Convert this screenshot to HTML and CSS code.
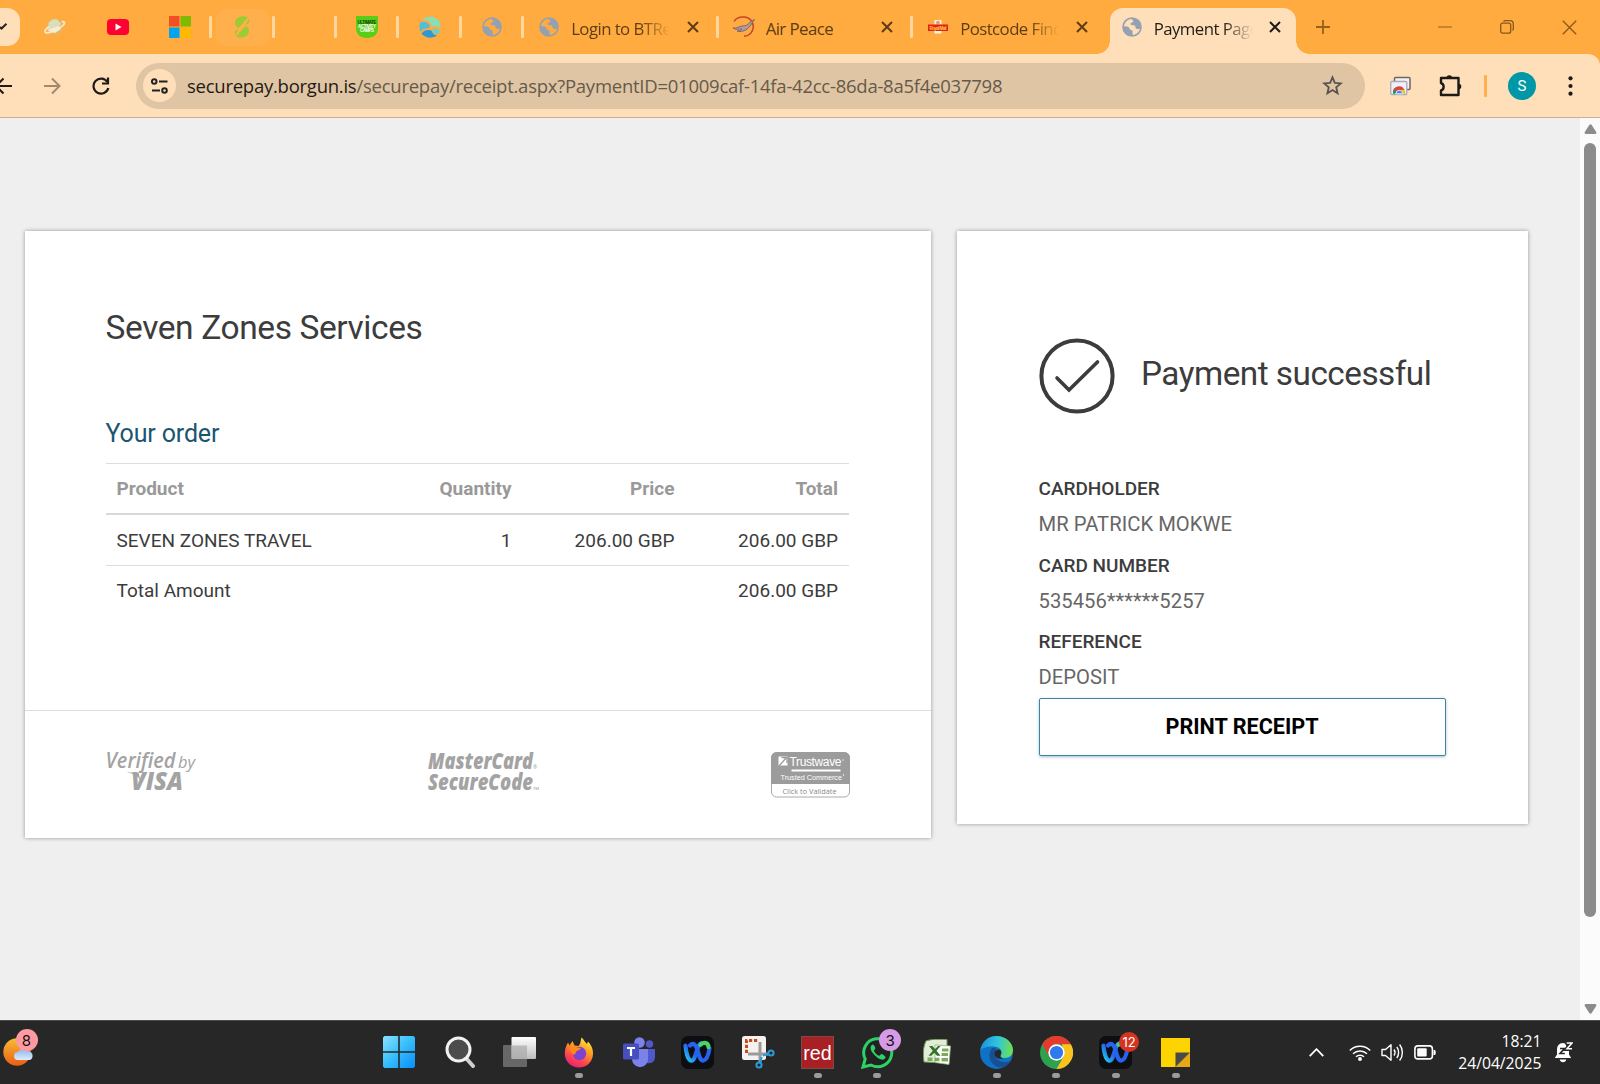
FILE: index.html
```html
<!DOCTYPE html>
<html lang="en">
<head>
<meta charset="utf-8">
<title>Payment Page</title>
<link rel="stylesheet" href="styles.css">
</head>
<body>
<svg class="defs" width="0" height="0" aria-hidden="true">
  <defs>
    <linearGradient id="gw" x1="0" y1="0" x2="1" y2="1"><stop offset="0" stop-color="#8be3ff"/><stop offset=".5" stop-color="#35bdfb"/><stop offset="1" stop-color="#0a8dfa"/></linearGradient>
    <linearGradient id="gsun" x1="0" y1="0" x2="0" y2="1"><stop offset="0" stop-color="#f8bb35"/><stop offset="1" stop-color="#ea5f14"/></linearGradient>
    <linearGradient id="gcloud" x1="0" y1="0" x2="0" y2="1"><stop offset="0" stop-color="#8fb4ee"/><stop offset="1" stop-color="#dcecff"/></linearGradient>
    <linearGradient id="gff" x1=".8" y1="0" x2=".3" y2="1"><stop offset="0" stop-color="#fff04a"/><stop offset=".4" stop-color="#ff9a1f"/><stop offset=".75" stop-color="#ff4050"/><stop offset="1" stop-color="#e6207c"/></linearGradient>
    <linearGradient id="gwx" x1="0" y1="1" x2="1" y2="0"><stop offset="0" stop-color="#1fd3ea"/><stop offset=".5" stop-color="#2460ee"/><stop offset="1" stop-color="#2f86ff"/></linearGradient>
    <linearGradient id="gtv" x1="0" y1="0" x2="0" y2="1"><stop offset="0" stop-color="#fff"/><stop offset="1" stop-color="#bdbdbd"/></linearGradient>
    <linearGradient id="gedge" x1="0" y1=".3" x2="1" y2=".4"><stop offset="0" stop-color="#1a8fd8"/><stop offset=".5" stop-color="#2fc3df"/><stop offset="1" stop-color="#6ee04f"/></linearGradient>
    <linearGradient id="gsw" x1="0" y1="1" x2="1" y2="0"><stop offset="0" stop-color="#2f9fd6"/><stop offset="1" stop-color="#7fe3b8"/></linearGradient>
    <symbol id="globe" viewBox="0 0 20 20"><circle cx="10" cy="10" r="9.8" fill="#93a1b3"/><path class="land" d="M8.500 2C4.800 3 2.300 6 2 9.300c2.300.2 4 .2 5 1.200.8.900.3 1.900 1.500 2.300 1.600.4 2.300 1 2 2.400-.2 1 0 2 .6 2.700 3.500-.4 6.200-3 6.900-6.400-1.600.8-3.400.8-4.300-.6-.6-1.200 0-2-1.100-2.500-1.300-.6-3 .2-3.900-.9-.6-1 .5-1.600 1.500-2C11.500 5 11.400 4.500 11 3.600 10.500 2.600 9.500 2 8.500 2z"/></symbol>
    <symbol id="webex" viewBox="0 0 33 33"><rect width="33" height="33" rx="7" fill="#0d0e11"/><path d="M4.500 9.500C6 24 9.500 26 12 24c3.500-3 3.500-15 8-16.500" fill="none" stroke="url(#gwx)" stroke-width="4.200" stroke-linecap="round"/><path d="M9 9.500c3.500-3.500 6-.5 7.500 4.500s2.500 11 6 10.500 5-6 6-12" fill="none" stroke="#2763ee" stroke-width="4.200" stroke-linecap="round"/><path d="M19.500 8.800c3-3.300 8-2.200 8 2.400" fill="none" stroke="#4bd367" stroke-width="4.200" stroke-linecap="round"/></symbol>
    <symbol id="cross" viewBox="0 0 12 12"><path d="M1 1l10 10M11 1L1 11" fill="none" stroke="currentColor" stroke-width="2"/></symbol>
  </defs>
</svg>

<header class="tabstrip">
  <div class="tab-search"><svg width="9" height="8" viewBox="0 0 9 8"><path d="M0 4l1.500 1.500L6.500 .8" fill="none" stroke="#222" stroke-width="2"/></svg></div>
  <div class="pin no-sep"><svg width="22" height="20" viewBox="0 0 22 20"><circle cx="11" cy="9.500" r="8" fill="#e3b665"/><path d="M4.500 6c2-3.500 6-4.500 8.500-3.500l4.500 4.500-5 5-8 1z" fill="#d9dfb9"/><path d="M5 9.500C1 12.500 0 14.800 1.800 15.600c4 1.200 18.200-5.800 18.700-9.600.1-1.200-1.300-1.500-2.800-1.200" fill="none" stroke="#fbe9c9" stroke-width="1.800"/><path d="M3 13l12-4 2 3-6 4z" fill="#f6ecd4"/></svg></div>
  <div class="pin no-sep"><svg width="22" height="16" viewBox="0 0 22 16"><rect width="22" height="16" rx="4" fill="#ff0033"/><path d="M8.500 4.500v7l6-3.500z" fill="#fff"/></svg></div>
  <div class="pin"><svg width="22" height="22" viewBox="0 0 22 22"><path fill="#f25022" d="M0 0h10.500v10.500H0z"/><path fill="#7fba00" d="M11.500 0H22v10.500H11.500z"/><path fill="#00a4ef" d="M0 11.500h10.500V22H0z"/><path fill="#ffb900" d="M11.500 11.500H22V22H11.500z"/></svg></div>
  <div class="pin lit"><svg width="16" height="22" viewBox="0 0 16 22"><path d="M14 1.500C8-1.500 1 1.500 1 7c0 2.500 1.500 4 3.500 5zM2 20.500C8 23.500 15 20.500 15 15c0-2.500-1.500-4-3.500-5zM15 2.500l-3.500 6.500L15 7zM1 19.500l3.500-6.500L1 15z" fill="#9ccb32"/></svg></div>
  <div class="pin"></div>
  <div class="pin"><svg width="22" height="22" viewBox="0 0 22 22"><path d="M0 0h22v12c0 6-4 10-11 10S0 18 0 12z" fill="#58cf16"/><g font-family="Liberation Sans" font-weight="700" font-size="4.500" text-anchor="middle"><text x="11" y="7.500" fill="#123b08" textLength="19">ULTIMATE</text><text x="11" y="11.500" fill="#fff" textLength="18">ACTIVITY</text><text x="11" y="15.500" fill="#fff" textLength="14">CAMPS</text></g></svg></div>
  <div class="pin"><svg width="22" height="22" viewBox="0 0 22 22"><path d="M3 4C8-1.500 20-.5 21.500 9c.3 2-1 3-2.500 2-2-1.500-5-1.500-7 .5 1-3.500-.5-6.500-4-7.300C6 3.800 4.500 3.800 3 4z" fill="#86dfb9"/><path d="M1.500 6C5 5 9 6 10.500 9c.8 2-.5 3.500-2.500 3.500-3 0-5.500 1.500-6.500 3.500C0 13 0 9 1.500 6z" fill="#55bdd6"/><path d="M2.500 17.500c2-3 5.500-4 8.500-3.500 2 .3 2 2.500 3.500 4 1 1 2.500 1.500 4 1-4.500 4-12.500 3.500-16-1.500z" fill="#2f98d2"/><path d="M13.500 14c1-2 4-2.500 7.500.5-.5 1.500-1 2.500-2 3.500-3 .5-6-1.500-5.500-4z" fill="#69cfcc"/></svg></div>
  <div class="pin"><svg class="globe" width="20" height="20"><use href="#globe"/></svg></div>
  <div class="tab"><svg class="globe" width="20" height="20"><use href="#globe"/></svg><span class="tab-title fade">Login to BTRes</span><svg class="x" width="12" height="12"><use href="#cross"/></svg></div>
  <div class="tab"><svg class="wide" width="22" height="22" viewBox="0 0 22 22"><path d="M1 5.500C3 2 7 .8 11 1c6 .3 9.500 5 9.300 10-.3 5-4 9-9.300 9.300" fill="none" stroke="#c8452a" stroke-width="1.500"/><path d="M0 12c4 1 6-2 9-2 4 0 6-1 8-4l4.500-2.500L19 7c-2 4-5 7-9 8-2 .5-4 1-6 0 3 0 4-1 5-2-3 0-6 1-9-1z" fill="#b59a95" stroke="#73617b" stroke-width=".9"/></svg><span class="tab-title">Air Peace</span><svg class="x" width="12" height="12"><use href="#cross"/></svg></div>
  <div class="tab no-sep"><svg width="20" height="20" viewBox="0 0 20 20"><path d="M6.500 3h7v4.500h-7zM6.500 12h7v4.500h-7z" fill="#fff1dd"/><circle cx="10" cy="5.800" r="2" fill="#d9a06c"/><rect y="7.500" width="20" height="6.500" fill="#e3211c"/><text x="10" y="12.500" font-family="Liberation Sans" font-weight="700" font-size="4.500" text-anchor="middle" fill="#ffd23c" textLength="17">Royal Mail</text></svg><span class="tab-title fade">Postcode Finder</span><svg class="x" width="12" height="12"><use href="#cross"/></svg></div>
  <div class="tab active"><svg class="globe" width="20" height="20"><use href="#globe"/></svg><span class="tab-title fade">Payment Page</span><svg class="x" width="12" height="12"><use href="#cross"/></svg></div>
  <svg class="plus" width="14" height="14" viewBox="0 0 14 14"><path d="M7 0v14M0 7h14" stroke="#96601c" stroke-width="1.800"/></svg>
  <div class="window-buttons">
    <svg width="14" height="16" viewBox="0 0 14 16"><path d="M0 8h14" stroke="#a97224" stroke-width="1.300"/></svg>
    <svg width="14" height="14" viewBox="0 0 14 14"><rect x=".7" y="3.200" width="10" height="10" rx="2" fill="none" stroke="#8a5719" stroke-width="1.300"/><path d="M3.500 1.500c.5-.6 1-.8 2-.8H10c2 0 3.300 1.200 3.300 3.300v4.500c0 1-.2 1.500-.8 2" fill="none" stroke="#8a5719" stroke-width="1.300"/></svg>
    <svg width="15" height="15" viewBox="0 0 15 15"><path d="M.8.800l13.400 13.400M14.200.800L.8 14.200" stroke="#8a5719" stroke-width="1.300"/></svg>
  </div>
</header>

<nav class="toolbar">
  <svg class="back" width="12" height="18" viewBox="0 0 12 18"><path d="M-4 9h16M3.500 1.500L-4 9l7.500 7.500" fill="none" stroke="#1f1a14" stroke-width="2"/></svg>
  <svg class="fwd" width="17" height="18" viewBox="0 0 17 18"><path d="M0 9h15.500M8 1.500L15.500 9 8 16.500" fill="none" stroke="#a18a6c" stroke-width="2"/></svg>
  <svg class="reload" width="18" height="18" viewBox="0 0 18 18"><path d="M15.300 5A7.500 7.500 0 1 0 16.300 11" fill="none" stroke="#1f1a14" stroke-width="2.200"/><path d="M16 .5v6h-6" fill="none" stroke="#1f1a14" stroke-width="2.200"/></svg>
  <div class="address">
    <span class="site"><svg width="17" height="16" viewBox="0 0 17 16"><g fill="none" stroke="#222" stroke-width="2"><circle cx="3.200" cy="3.500" r="2.300"/><path d="M8 3.500h8.500M1 12.500h8"/><circle cx="13.500" cy="12.500" r="2.300"/></g></svg></span>
    <span class="url"><b>securepay.borgun.is</b>/securepay/receipt.aspx?PaymentID=01009caf-14fa-42cc-86da-8a5f4e037798</span>
    <svg class="star" width="21" height="21" viewBox="0 0 21 21"><path d="M10.500 2.300l2.300 5.600 6 .5-4.600 3.900 1.400 5.900-5.100-3.200-5.100 3.200 1.400-5.900L2.200 8.400l6-.5z" fill="none" stroke="#57534d" stroke-width="1.800"/></svg>
  </div>
  <svg class="cast" width="21" height="20" viewBox="0 0 21 20"><rect x="4.500" y="1.500" width="15.500" height="12" rx="1" fill="#f4f1ee" stroke="#6b6862" stroke-width="1.500"/><rect x=".8" y="5.500" width="16" height="13" rx="1" fill="#eef2f8" stroke="#aab" stroke-width="1.300"/><path d="M3 17a6 6 0 0 1 11.500-3l-4 2z" fill="#db4437"/><path d="M3 17.800c0-2 .5-3.500 1.500-4.500l2.500 4.500z" fill="#0f9d58"/><path d="M11.500 13.500l3 .5c.5 1 .7 2.500.7 3.800h-4z" fill="#f4c20d"/><path d="M5.800 17.800a3.500 3.500 0 0 1 7 0z" fill="#4285f4" stroke="#fff" stroke-width=".8"/></svg>
  <svg class="puzzle" width="24" height="24" viewBox="0 0 24 24"><path d="M3 4h17.500v17H3v-4.500c3.500-1 3.500-6.500 0-7.500z" fill="none" stroke="#1d1b18" stroke-width="2.400" stroke-linejoin="round"/><path d="M8.500 4a2.800 2.800 0 0 1 5.600 0zM20.500 9.800a2.800 2.800 0 0 1 0 5.600z" fill="#1d1b18"/></svg>
  <i class="bar"></i>
  <span class="avatar">S</span>
  <svg class="dots" width="5" height="20" viewBox="0 0 5 20"><g fill="#1d1b18"><circle cx="2.500" cy="2.300" r="2.100"/><circle cx="2.500" cy="10" r="2.100"/><circle cx="2.500" cy="17.700" r="2.100"/></g></svg>
</nav>

<div class="viewport">
  <main class="page">
    <section class="card order">
      <div class="order-body">
        <h1>Seven Zones Services</h1>
        <h2>Your order</h2>
        <table>
          <thead><tr><th>Product</th><th>Quantity</th><th>Price</th><th>Total</th></tr></thead>
          <tbody>
            <tr><td>SEVEN ZONES TRAVEL</td><td>1</td><td>206.00 GBP</td><td>206.00 GBP</td></tr>
            <tr><td colspan="3">Total Amount</td><td>206.00 GBP</td></tr>
          </tbody>
        </table>
      </div>
      <footer class="logos">
        <svg width="92" height="46" viewBox="0 0 92 46" fill="#a3a3a3" font-family="Open Sans" font-style="italic"><text x="-.5" y="16" font-size="21" font-weight="600" textLength="70" lengthAdjust="spacingAndGlyphs">Verified</text><text x="72" y="16" font-size="17" font-weight="500" textLength="17" lengthAdjust="spacingAndGlyphs">by</text><path d="M20.500 20.500h12l2 8c-2-4-6-7-14-8z"/><text x="25" y="37.700" font-size="24.500" font-weight="800" textLength="52" lengthAdjust="spacingAndGlyphs">VISA</text></svg>
        <svg width="112" height="46" viewBox="0 0 112 46" fill="#a3a3a3" font-family="Open Sans" font-style="italic" font-weight="800"><text x="0" y="16.500" font-size="22.500" textLength="105" lengthAdjust="spacingAndGlyphs">MasterCard</text><text x="0" y="37.500" font-size="22.500" textLength="105" lengthAdjust="spacingAndGlyphs">SecureCode</text><text x="105" y="16.500" font-size="5" font-weight="400" font-style="normal">®</text><text x="105" y="37.500" font-size="4" font-weight="600" font-style="normal">TM</text></svg>
        <svg width="79" height="46" viewBox="0 0 79 46" font-family="Liberation Sans"><rect x=".5" y=".5" width="78" height="44.500" rx="5" fill="#fff" stroke="#aaa"/><path d="M0 32V6a6 6 0 0 1 6-6h67a6 6 0 0 1 6 6v26z" fill="#9c9c9c"/><rect x="7.500" y="4.500" width="9" height="9" fill="#fff"/><path d="M8 14L15 6M10.500 5.500H16V11" fill="none" stroke="#9c9c9c" stroke-width="1.300"/><text x="18.500" y="13.500" font-size="12" fill="#fff" textLength="52">Trustwave</text><path d="M20.500 18.500h49" stroke="#fff" stroke-width="1.800"/><text x="9.500" y="27.500" font-size="8" fill="#fff" textLength="61.500" lengthAdjust="spacingAndGlyphs">Trusted Commerce</text><g fill="#fff"><circle cx="72" cy="8" r=".7"/><circle cx="72.500" cy="23" r=".7"/></g><text x="11.500" y="41.500" font-size="8" font-family="Open Sans" fill="#888" textLength="54" lengthAdjust="spacingAndGlyphs">Click to Validate</text></svg>
      </footer>
    </section>

    <section class="card result">
      <div class="status">
        <svg width="76" height="76" viewBox="0 0 76 76" fill="none" stroke="#3c3c3c"><circle cx="38" cy="38" r="35.600" stroke-width="4"/><path d="M18 40l12 12L58.500 24" stroke-width="3.600" stroke-linecap="round"/></svg>
        <p>Payment successful</p>
      </div>
      <dl>
        <dt>CARDHOLDER</dt><dd>MR PATRICK MOKWE</dd>
        <dt>CARD NUMBER</dt><dd>535456******5257</dd>
        <dt>REFERENCE</dt><dd>DEPOSIT</dd>
      </dl>
      <button type="button">PRINT RECEIPT</button>
    </section>
  </main>
  <aside class="scrollbar">
    <svg width="13" height="10" viewBox="0 0 13 10"><path d="M5.300 1c.6-.9 1.800-.9 2.400 0l4.500 7c.5.900.1 2-1 2H1.800C.7 10 .3 8.900.8 8z" fill="#8b8b8b"/></svg>
    <i class="thumb"></i>
    <svg class="down" width="13" height="10" viewBox="0 0 13 10"><path d="M5.300 9c.6.9 1.800.9 2.400 0l4.500-7c.5-.9.1-2-1-2H1.800C.7 0 .3 1.100.8 2z" fill="#8b8b8b"/></svg>
  </aside>
</div>

<footer class="taskbar">
  <div class="weather"><svg width="38" height="40" viewBox="0 0 38 40"><circle cx="17" cy="23" r="13.700" fill="url(#gsun)"/><path d="M18 31a4 4 0 0 1 0-8c1-4 9-4 10-.5 6-.5 6 8.500 1 8.500z" fill="url(#gcloud)"/></svg><b class="badge pink">8</b></div>
  <div class="apps">
    <span><svg width="32" height="32" viewBox="0 0 32 32"><path d="M1.500 0h13.700v15.200H0V1.500zM16.800 0h13.700L32 1.500v13.700H16.800zM0 16.800h15.200V32H1.500L0 30.500zM16.800 16.800H32v13.700L30.500 32H16.800z" fill="url(#gw)"/></svg></span>
    <span><svg class="nudge" width="31" height="32" viewBox="0 0 31 32"><path d="M20.500 21.500l7.500 8.500" stroke="#cfcfcf" stroke-width="4" stroke-linecap="round"/><circle cx="13.500" cy="13.500" r="11.500" fill="#4c4c4c" stroke="#f2f2f2" stroke-width="3"/></svg></span>
    <span><svg class="nudge" width="33" height="32" viewBox="0 0 33 32"><rect y="9" width="24" height="22" rx="1" fill="#676767"/><rect x="8.500" y="1" width="24.500" height="22" rx="1" fill="url(#gtv)"/><path d="M8.500 9.500H24V23H8.500z" fill="#aaa" opacity=".7"/></svg></span>
    <span class="on"><svg width="30" height="31" viewBox="0 0 30 31"><path d="M15 30.500C6.500 30.500.8 24 .8 16.500c0-4 1-7 3.200-11l1.500 3L8.500 4l2 4.500 4 .5c2-1.500 2-5 3-8.500 2 1.500 3 4.500 5.500 6.500l1-2.500c3 3.500 5 6.500 5 12 0 8-6 14-14 14z" fill="url(#gff)"/><circle cx="15.500" cy="16.500" r="6.700" fill="#7b43cf"/><path d="M5 12c3-3 6-3 8-1.500l4 .5c-1 2-3 2-4 3-2 1-1 3-2.500 3.500C8 18 8 14.500 5 12z" fill="#ff8a1c"/></svg></span>
    <span><svg class="nudge" width="32" height="30" viewBox="0 0 32 30"><circle cx="26.500" cy="7" r="3.700" fill="#5059c9"/><path d="M21 12h11v8c0 4-3 7-8 6z" fill="#5059c9"/><circle cx="16.500" cy="5.500" r="5.300" fill="#7b83eb"/><path d="M9 12h16v9a8 8 0 0 1-16 2z" fill="#7b83eb"/><rect y="6.500" width="16" height="16" rx="1.500" fill="#464fbd"/><path d="M4 11h8M8 11v8" stroke="#fff" stroke-width="2.200"/></svg></span>
    <span><svg width="33" height="33"><use href="#webex"/></svg></span>
    <span><svg width="34" height="34" viewBox="0 0 34 34"><rect x="1" y="1" width="24" height="24" rx="2.500" fill="#f4f1ef"/><path d="M5.500 18V5.500H18" fill="none" stroke="#c8481d" stroke-width="3" stroke-dasharray="3.200 1.800"/><path d="M19 7v20M7 19h20" stroke="#9b9b9b" stroke-width="3"/><circle cx="30" cy="18" r="2.600" fill="none" stroke="#2a9ad8" stroke-width="2"/><circle cx="18" cy="30" r="2.600" fill="none" stroke="#2a9ad8" stroke-width="2"/><path d="M19.500 27l1-5M27 19l-5 1.500" stroke="#2a9ad8" stroke-width="2.200"/></svg></span>
    <span class="on"><svg width="33" height="33" viewBox="0 0 33 33"><rect width="33" height="33" fill="#a81f24"/><rect x=".5" y=".5" width="32" height="32" fill="none" stroke="#7e4a45"/><text x="16.500" y="24" font-family="Liberation Sans" font-size="21" fill="#fff" text-anchor="middle" textLength="28.500" lengthAdjust="spacingAndGlyphs">red</text></svg></span>
    <span class="on"><svg width="33" height="33" viewBox="0 0 33 33"><path d="M2 31l2.200-8A14 14 0 1 1 10 29z" fill="#222" stroke="#2bd366" stroke-width="3"/><path d="M11.500 8.500c-3 2-2.500 6 2 10.500s9 6.500 11 2.500c.5-1-3-3.500-4-3.500s-1.500 2-2.500 1.800c-2-.5-4.500-3-5-5 0-1 1.500-1.500 1.300-2.500-.3-1.500-1.500-4-2.800-3.800z" fill="#2bd366"/></svg><b class="badge lilac">3</b></span>
    <span><svg width="28" height="26" viewBox="0 0 28 26"><path d="M3 2C8 0 16 0 24 .5V24L1 23C0 15 0 8 3 2z" fill="#e2ecd7" stroke="#6b9b48" stroke-width="1"/><path d="M12 6l15.500 1-1.500 18.500-14-2z" fill="#fff" stroke="#8db574" stroke-width=".8"/><path d="M6 7h3.500l2.500 3L15 7h2.500l-4 4.800 4 5H14l-2.700-3-3 3H5.500l4.300-5z" fill="#35702a"/><g fill="#7fab5f"><path d="M19 9.500h6.500v3H19zM18.500 14H25v3h-6.500zM4.500 18.500h5v3.500h-5zM11.500 18.800h5v3.500h-5zM18.500 19H25v3.500h-6.500z"/></g></svg></span>
    <span class="on"><svg width="33" height="33" viewBox="0 0 33 33"><circle cx="16.500" cy="16.500" r="16.400" fill="#0f72c4"/><path d="M.2 15C1.500 6 8 .1 16.500.1 26 .1 33 7 33 14c0 5-3.500 8-8 8-4 0-5.500-1.500-4.500-3 2-3 0-8-6-8.500C7.500 10 2 11.500.2 15z" fill="url(#gedge)"/><path d="M12.500 12c-7 7-1 19 8 19.500 4 0 9-3.500 10.500-7-6 3.500-14 1-15.500-4-.8-3 .5-5 1.500-6-1-2-3-3-4.500-2.500z" fill="#164f92"/><path d="M14.500 17c1-3 3.500-3 5.500-3.500 2 2 1.500 4.500.5 6-.5 1.500.5 2.500 3 2.800-4 1.500-9-.5-9-5.300z" fill="#272727"/></svg></span>
    <span class="on"><svg width="33" height="33" viewBox="0 0 33 33"><circle cx="16.500" cy="16.500" r="16.500" fill="#2da14d"/><path d="M2.200 8.200A16.500 16.500 0 0 1 30.800 8.200H16.500l-7.200 12.400z" fill="#e33b2e"/><path d="M30.800 8.200A16.500 16.500 0 0 1 16.500 33l7.200-12.400L22 8.200z" fill="#fcc31e"/><circle cx="16.500" cy="16.500" r="8.200" fill="#fff"/><circle cx="16.500" cy="16.500" r="6.600" fill="#2f78ee"/></svg></span>
    <span class="on"><svg width="33" height="33"><use href="#webex"/></svg><b class="badge red">12</b></span>
    <span class="on"><svg width="29" height="29" viewBox="0 0 29 29"><path d="M0 0h29v14.500L14.500 29H0z" fill="#fdd400"/><path d="M14.500 14.500H29L14.500 29z" fill="#4a4a4a"/><path d="M29 14.500V29H14.500z" fill="#e9a913"/></svg></span>
  </div>
  <div class="tray">
    <svg class="chev" width="15" height="9" viewBox="0 0 15 9"><path d="M.7 8.200l6.800-7 6.800 7" fill="none" stroke="#fff" stroke-width="1.800"/></svg>
    <svg class="wifi" width="22" height="17" viewBox="0 0 22 17" fill="none" stroke="#fff" stroke-width="1.500"><path d="M.8 6.500a14.500 14.500 0 0 1 20.400 0M4 9.800a10 10 0 0 1 14 0M7 12.800a5.800 5.800 0 0 1 8 0"/><circle cx="11" cy="15" r="1.200" fill="#fff"/></svg>
    <svg class="vol" width="23" height="19" viewBox="0 0 23 19" fill="none" stroke="#fff" stroke-width="1.400"><path d="M1 6.500h3.500L10 1.800v15.400l-5.500-4.700H1z" stroke-linejoin="round"/><path d="M13 6.500c1.200 1.700 1.200 4.300 0 6M15.800 4c2.400 3 2.400 8 0 11M18.600 1.500c3.700 4.500 3.700 11.500 0 16"/></svg>
    <svg class="bat" width="22" height="15" viewBox="0 0 22 15"><rect x=".9" y=".9" width="17.500" height="13" rx="3" fill="none" stroke="#fff" stroke-width="1.600"/><rect x="3.200" y="3.200" width="9.500" height="8.400" rx="1" fill="#fff"/><path d="M19.500 5h1.500c1 1 1 4 0 5h-1.500z" fill="#fff"/></svg>
    <div class="clock"><span>18:21</span><span>24/04/2025</span></div>
    <svg class="bell" width="19" height="21" viewBox="0 0 19 21"><path d="M9 1C5 1 3 4 3 7.500v5L.8 16h16.400L15 12.500V9L11 1.500z" fill="#fff"/><path d="M5.700 17.500h6.600c-.6 3.500-6 3.500-6.600 0z" fill="#fff"/><path d="M6 6.500h4.500L6 11.500h4.800" fill="none" stroke="#272727" stroke-width="1.600"/><path d="M12.500 1H18l-5.200 6H18" fill="none" stroke="#272727" stroke-width="4"/><path d="M12.700 1H18l-5 5.800h5" fill="none" stroke="#fff" stroke-width="1.500"/></svg>
  </div>
</footer>
</body>
</html>
```
FILE: styles.css
```css
* { box-sizing: border-box; }
html, body { margin: 0; height: 100%; overflow: hidden; }
body { display: flex; flex-direction: column; width: 1600px; height: 1084px; font-family: Roboto, "Liberation Sans", sans-serif; color: #3c3c3c; background: #ffab40; }
svg { display: block; flex: none; }
.defs { position: absolute; }

.tabstrip { display: flex; height: 54px; flex: none; background: #ffab40; font-family: "Open Sans", "Noto Sans", sans-serif; --land: #ffab40; }
.tab-search { width: 20px; height: 38px; margin: 8px 4px 0 0; padding: 15px 0 0 0; border-radius: 0 13px 13px 0; background: #ffdfb9; }
.pin, .tab { display: flex; align-items: center; height: 54px; position: relative; }
.pin { width: 62.400px; justify-content: center; }
.pin::after, .tab::after { content: ""; position: absolute; right: -1px; top: 16px; width: 3px; height: 22px; border-radius: 1px; background: #ffd79f; }
.pin.no-sep::after, .tab.no-sep::after { display: none; }
.lit::before { content: ""; position: absolute; inset: 9px 4px 8px 5px; border-radius: 12px; background: #ffb04d; }
.lit svg { position: relative; }
.land { fill: var(--land); }
.tab { width: 194.500px; padding: 0 19px 0 16px; color: #5c3d15; }
.tab > svg:first-child { margin-right: 12px; }
.tab > svg.wide { margin-left: -1px; margin-right: 11px; }
.tab-title { flex: none; font-size: 16.800px; letter-spacing: -.55px; white-space: nowrap; overflow: hidden; padding-top: 3px; line-height: 24px; }
.fade { width: 99px; -webkit-mask-image: linear-gradient(90deg, #000 70%, transparent 100%); mask-image: linear-gradient(90deg, #000 70%, transparent 100%); }
.x { margin-left: auto; }
.tab.active { width: 186.500px; height: 46px; margin: 8px 0 0 3px; padding: 0 15px 8px 12px; border-radius: 13px 13px 0 0; background: #ffdfb9; color: #1f1a14; --land: #ffdfb9; }
.tab.active::before, .tab.active::after { content: ""; position: absolute; top: auto; right: auto; bottom: 0; width: 13px; height: 13px; border-radius: 0; }
.tab.active::before { left: -13px; background: radial-gradient(circle at 0 0, transparent 12.500px, #ffdfb9 13px); }
.tab.active::after { right: -13px; background: radial-gradient(circle at 100% 0, transparent 12.500px, #ffdfb9 13px); }
.plus { margin: 20px 0 0 20px; }
.window-buttons { display: flex; align-items: center; gap: 48px; margin-left: auto; padding-right: 23px; }

.toolbar { display: flex; align-items: center; height: 64px; flex: none; border-bottom: 1px solid #c9b294; border-radius: 0 12px 0 0; background: #ffdfb9; }
.fwd { margin-left: 32px; }
.reload { margin-left: 31px; }
.address { display: flex; align-items: center; width: 1229px; height: 46px; margin-left: 26px; padding: 0 22px 0 7px; border-radius: 23px; background: #dfc5a3; }
.site { display: flex; align-items: center; justify-content: center; width: 33px; height: 33px; border-radius: 50%; background: #ffdfb9; }
.url { margin-left: 11px; font-family: "Open Sans", "Noto Sans", sans-serif; font-size: 18.500px; letter-spacing: -.25px; color: #665a4b; white-space: nowrap; }
.url b { font-weight: 400; color: #1f1a14; }
.star { margin-left: auto; }
.cast { margin-left: 25px; }
.puzzle { margin-left: 27px; }
.bar { width: 3px; height: 22px; margin-left: 22px; border-radius: 1px; background: #ffb04b; }
.avatar { width: 28px; height: 28px; margin-left: 21px; border-radius: 50%; background: #0097a7; color: #fff; font-size: 15px; line-height: 28px; text-align: center; }
.dots { margin-left: 32px; }

.viewport { display: flex; flex: none; height: 902px; background: #efefef; }
.page { display: flex; align-items: flex-start; gap: 26px; flex: 1; padding: 113px 0 0 24.500px; }
.card { background: #fff; box-shadow: 0 0 4px rgba(0, 0, 0, .38); }
.order { display: flex; flex-direction: column; width: 906px; height: 607px; }
.order-body { flex: 1; padding: 73px 81px 0; }
h1, h2, p, dl, dd { margin: 0; font-weight: 400; }
h1 { font-size: 33.500px; line-height: 48px; letter-spacing: -.4px; }
h2 { margin-top: 67px; font-size: 25px; line-height: 30px; letter-spacing: -.15px; color: #1b5670; }
table { width: 743.500px; margin-top: 14px; border-collapse: separate; border-spacing: 0; table-layout: fixed; font-size: 19px; }
th, td { height: 50px; padding: 0 11px; text-align: right; line-height: 24px; }
th { height: 52px; border-top: 1px solid #ddd; border-bottom: 2px solid #d8d8d8; color: #999; font-weight: 700; }
th:first-child, td:first-child { text-align: left; }
th:nth-child(1) { width: 253px; }
th:nth-child(2) { width: 164px; }
th:nth-child(3) { width: 163px; }
tbody tr:first-child td { height: 51px; padding-top: 1px; border-bottom: 1px solid #ddd; }
.logos { display: flex; justify-content: space-between; height: 128px; padding: 41px 81px 0; border-top: 1px solid #ddd; }

.result { width: 571px; height: 593px; padding: 107px 82px 0; }
.status { display: flex; }
.status p { margin: 12px 0 0 26.500px; font-size: 33.300px; letter-spacing: -.5px; line-height: 48px; white-space: nowrap; }
dl { margin-top: 63px; }
dt, dd { line-height: 24px; }
dt { margin-bottom: 11px; font-size: 19px; font-weight: 500; }
dd { margin-bottom: 17.500px; font-size: 20.200px; letter-spacing: .05px; color: #666; }
dd:last-child { margin-bottom: 9px; }
button { display: block; width: 407px; height: 58px; padding: 0; border: 1px solid #3d82a8; border-radius: 2px; background: #fff; box-shadow: 0 1px 3px rgba(0, 60, 90, .35); color: #000; font: 700 21.600px/24px Roboto, sans-serif; }

.scrollbar { display: flex; flex-direction: column; align-items: center; width: 20px; padding: 6px 0; background: #fbfbfb; }
.thumb { width: 12px; height: 774px; margin-top: 9px; border-radius: 6px; background: #8b8b8b; }
.down { margin-top: auto; }

.taskbar { display: flex; height: 64px; flex: none; border-top: 1px solid #4b4b4b; background: #272727; color: #fff; }
.weather { position: relative; width: 38px; padding-top: 8px; }
.badge { position: absolute; width: 22px; height: 22px; border-radius: 50%; font: 400 15px/23px Inter, sans-serif; text-align: center; color: #111; }
.pink { left: 15.500px; top: 8px; background: #ff9ba0; }
.apps { display: flex; margin-left: 331.500px; }
.apps span { position: relative; display: flex; align-items: center; justify-content: center; width: 59.730px; height: 62px; }
.nudge { margin-left: 2px; }
.apps .on::after { content: ""; position: absolute; left: 26px; top: 52px; width: 8px; height: 5px; border-radius: 3px; background: #9b9b9b; }
.lilac { left: 32px; top: 8px; background: #d69ae6; }
.red { left: 33px; top: 11px; width: 20px; height: 20px; background: #d63420; color: #fff; font-size: 13px; line-height: 20px; }
.tray { display: flex; align-items: center; margin-left: auto; padding-right: 27px; }
.wifi { margin-left: 25px; }
.vol { margin-left: 10px; }
.bat { margin-left: 10px; }
.clock { display: flex; flex-direction: column; align-items: flex-end; width: 105.500px; font-family: "Open Sans", "Noto Sans", sans-serif; font-size: 15.700px; line-height: 21.500px; }
.bell { margin-left: 12.500px; }
```
